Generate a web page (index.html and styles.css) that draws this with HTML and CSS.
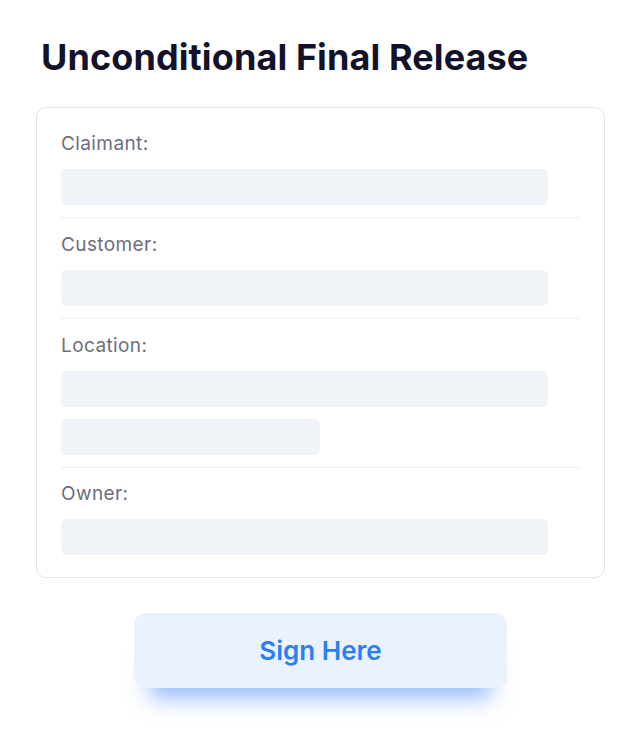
FILE: index.html
```html
<!DOCTYPE html>
<html lang="en">
<head>
    <meta charset="UTF-8">
    <meta name="viewport" content="width=device-width, initial-scale=1.0">
    <title>Unconditional Final Release</title>
    <link rel="stylesheet" href="styles.css">
</head>
<body>

    <div class="page">
        <h1 class="title">Unconditional Final Release</h1>

        <div class="card">
            <div class="field">
                <div class="label">Claimant:</div>
                <div class="bar"></div>
            </div>
            <div class="field">
                <div class="label">Customer:</div>
                <div class="bar"></div>
            </div>
            <div class="field">
                <div class="label">Location:</div>
                <div class="bar"></div>
                <div class="bar short"></div>
            </div>
            <div class="field">
                <div class="label">Owner:</div>
                <div class="bar"></div>
            </div>
        </div>

        <div class="actions">
            <button type="button" class="sign-btn">Sign Here</button>
        </div>
    </div>

</body>
</html>
```

FILE: styles.css
```css
body { margin: 0; background: #ffffff; font-family: Inter, "Open Sans", sans-serif; }
.page { padding: 35px 36px 48px; }
.title { margin: 0 0 28px 5px; font-size: 36px; line-height: 44px; font-weight: 700; color: #12132a; letter-spacing: 0.1px; }

.card { border: 1px solid #e3e4e8; border-radius: 10px; padding: 24px 24px 22px; }
.field { padding: 15px 0 12px; border-bottom: 1px solid #eeeff2; }
.field:first-child { padding-top: 0; }
.field:last-child { padding: 14px 0 0; border-bottom: none; }
.label { font-size: 19px; line-height: 24px; color: #6d6e7e; margin-bottom: 13px; letter-spacing: 0.4px; }
.bar { height: 36px; width: 487px; background: #f0f3f7; border-radius: 6px; }
.bar + .bar { margin-top: 12px; }
.bar.short { width: 259px; }

.actions { display: flex; justify-content: center; padding-top: 35px; }
.sign-btn { width: 373px; height: 75px; border: none; border-radius: 12px; background: #eaf2fe; color: #2a7ff6; font-family: inherit; font-size: 26px; font-weight: 600; cursor: pointer; box-shadow: 0 26px 22px -16px rgba(59, 130, 246, 0.55); }
```
